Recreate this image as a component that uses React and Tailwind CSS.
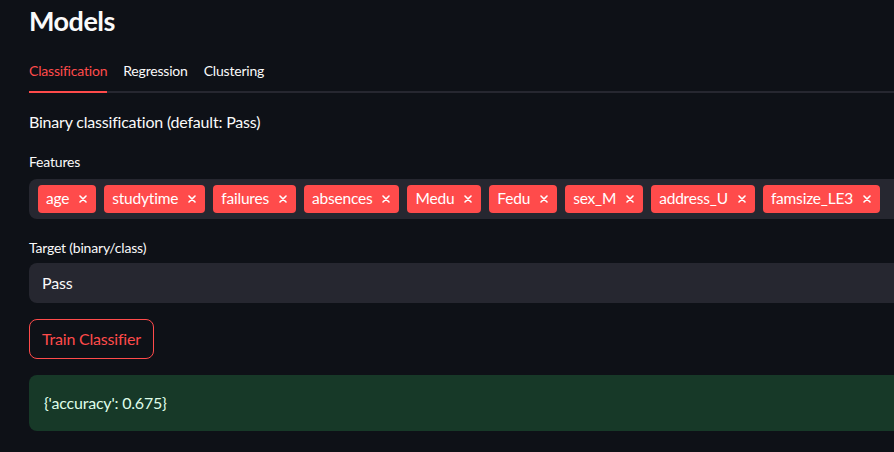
import React from "react";

const features = ["age", "studytime", "failures", "absences", "Medu", "Fedu", "sex_M", "address_U", "famsize_LE3"];

function Tag({ label }) {
  return (
    <span className="flex items-center h-[28px] pl-[8px] pr-[9px] rounded-[4px] bg-[#ff4b4b] text-white text-[15.5px]">
      {label}
      <svg className="ml-[10px]" width="8" height="8" viewBox="0 0 8 8">
        <path d="M1 1 L7 7 M7 1 L1 7" stroke="white" strokeWidth="1.6" strokeLinecap="round" />
      </svg>
    </span>
  );
}

export default function App() {
  return (
    <div
      className="w-[894px] h-[452px] overflow-hidden bg-[#0e1117] text-[#fafafa] tracking-[-0.2px]"
      style={{ fontFamily: "Lato, 'Noto Sans', sans-serif" }}
    >
      <div className="w-[960px] pl-[29px]">
        <h1 className="text-[27px] font-bold leading-none pt-[7px] h-[50px] tracking-[-0.5px]">Models</h1>

        <div className="flex gap-[16px] text-[14px] h-[43px] items-center border-b-2 border-[#262730]">
          <div className="h-full flex items-center relative text-[#ff4b4b]">
            Classification
            <span className="absolute left-0 right-0 -bottom-[2px] h-[2px] bg-[#ff4b4b]" />
          </div>
          <div>Regression</div>
          <div>Clustering</div>
        </div>

        <p className="text-[16px] mt-[18px] leading-[22px]">Binary classification (default: Pass)</p>

        <div className="text-[14px] mt-[20px] leading-[18px]">Features</div>
        <div className="mt-[8px] h-[40px] rounded-[8px] bg-[#262730] flex items-center gap-[8px] px-[9px]">
          {features.map((f) => (
            <Tag key={f} label={f} />
          ))}
        </div>

        <div className="text-[14px] mt-[20px] leading-[18px]">Target (binary/class)</div>
        <div className="mt-[6px] h-[40px] rounded-[8px] bg-[#262730] flex items-center px-[13px] text-[16px]">
          Pass
        </div>

        <button className="mt-[16px] h-[40px] px-[12px] rounded-[8px] border border-[#ff4b4b] text-[#ff4b4b] text-[16px]">
          Train Classifier
        </button>

        <div className="mt-[16px] h-[56px] rounded-[8px] bg-[#173928] flex items-center px-[15px] text-[16px] text-[#dffde9]">
          {"{'accuracy': 0.675}"}
        </div>
      </div>
    </div>
  );
}
